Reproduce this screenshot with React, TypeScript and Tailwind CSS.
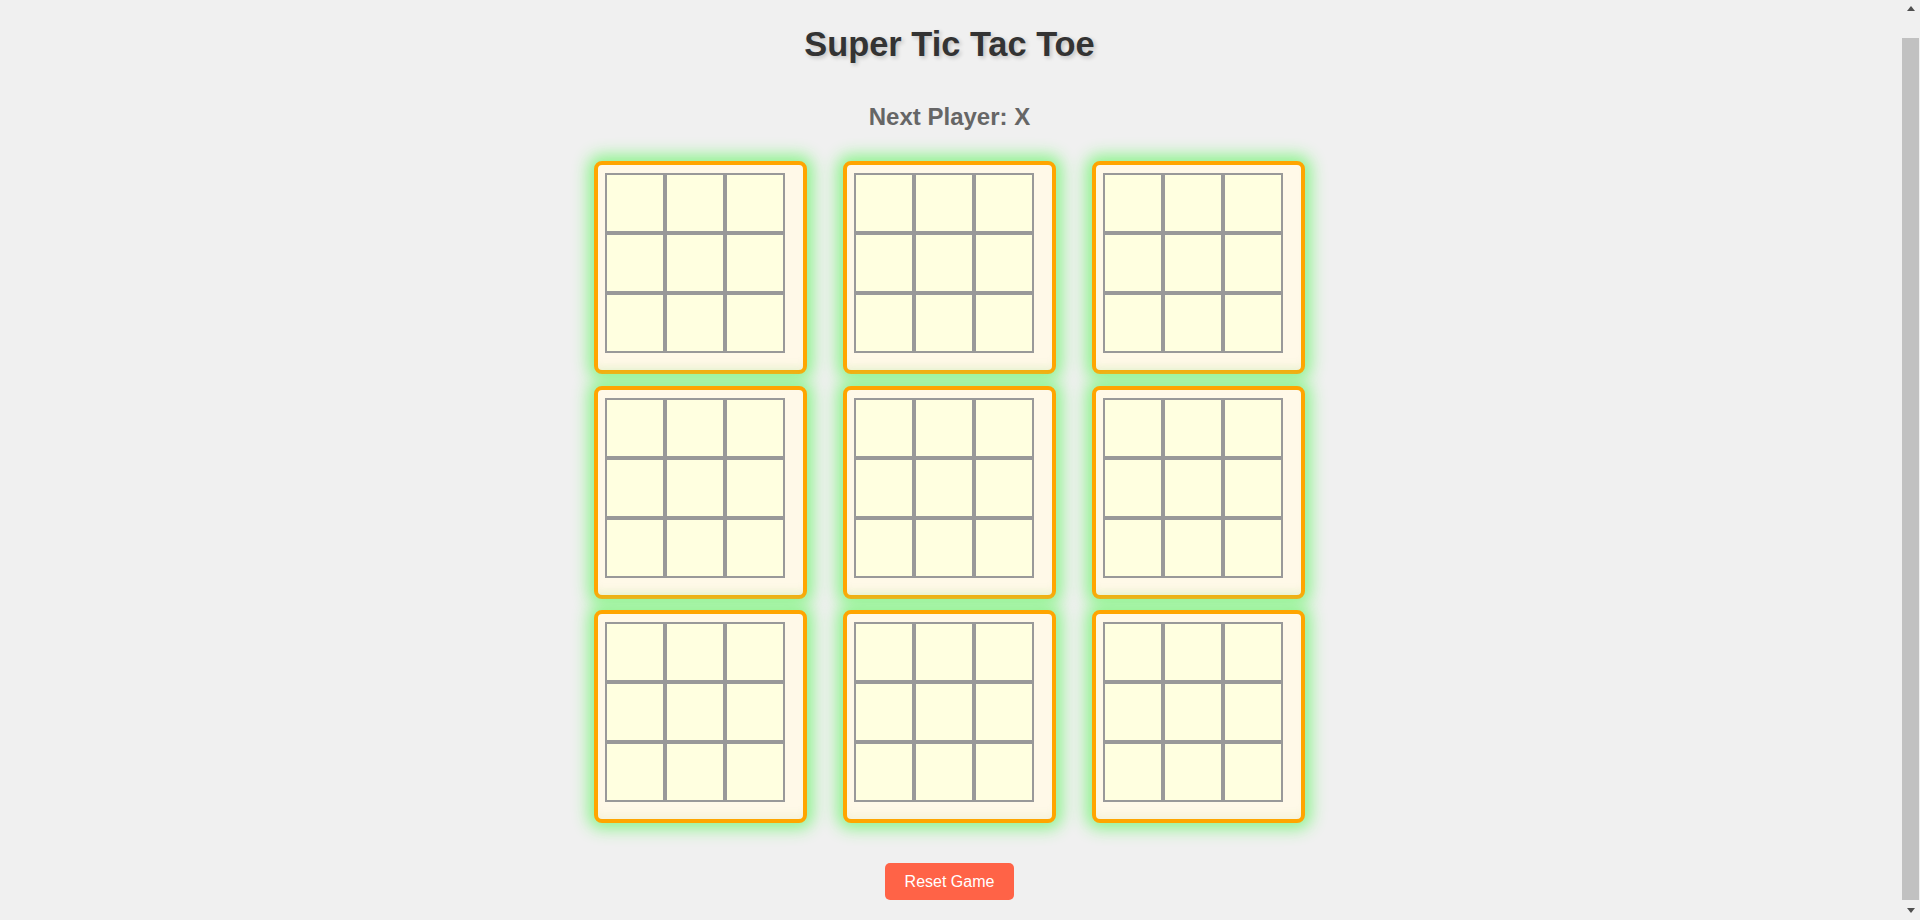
import React from "react";

function Board() {
  return (
    <div className="w-[213px] h-[213px] rounded-[8px] border-4 border-[#ffa500] bg-[#fff9e8] pl-[7px] pt-[8px] shadow-[0_0_16px_6px_#8ef48e,inset_0_-10px_10px_-6px_rgba(120,160,60,0.08)]">
      <div className="grid grid-cols-[repeat(3,60px)] grid-rows-[repeat(3,60px)]">
        {Array.from({ length: 9 }).map((_, i) => (
          <div key={i} className="w-[60px] h-[60px] border-2 border-[#999999] bg-[#ffffe0]" />
        ))}
      </div>
    </div>
  );
}

function Scrollbar() {
  return (
    <div className="w-[21px] h-[920px] shrink-0 bg-[#f0f0f0] flex flex-col items-center">
      <div className="h-[17px] w-full flex items-center justify-center pl-[2px]">
        <div className="w-0 h-0 border-l-[4px] border-r-[4px] border-b-[5px] border-l-transparent border-r-transparent border-b-[#505050]" />
      </div>
      <div className="mt-[21px] w-[17px] ml-[2px] h-[862px] bg-[#c1c1c1]" />
      <div className="flex-1 w-full flex items-center justify-center pl-[2px]">
        <div className="w-0 h-0 border-l-[4px] border-r-[4px] border-t-[5px] border-l-transparent border-r-transparent border-t-[#505050]" />
      </div>
    </div>
  );
}

export default function App() {
  return (
    <div className="h-[920px] overflow-hidden bg-[#f0f0f0] font-['Liberation_Sans',Arial,sans-serif] flex">
      <div className="flex-1 flex flex-col items-center pt-[25px]">
        <h1 className="text-[34.4px] leading-[39px] font-bold text-[#333333] [text-shadow:2px_2px_4px_rgba(0,0,0,0.2)]">
          Super Tic Tac Toe
        </h1>
        <div className="mt-[39px] text-[24px] leading-[28px] font-bold text-[#666666]">
          Next Player: X
        </div>
        <div className="mt-[30px] grid grid-cols-[repeat(3,213px)] gap-x-[36px] gap-y-[11.5px]">
          {Array.from({ length: 9 }).map((_, i) => (
            <Board key={i} />
          ))}
        </div>
        <button className="mt-[40px] h-[37px] px-[20px] rounded-[5px] bg-[#ff6347] text-white text-[16px] leading-[18px]">
          Reset Game
        </button>
      </div>
      <Scrollbar />
    </div>
  );
}
